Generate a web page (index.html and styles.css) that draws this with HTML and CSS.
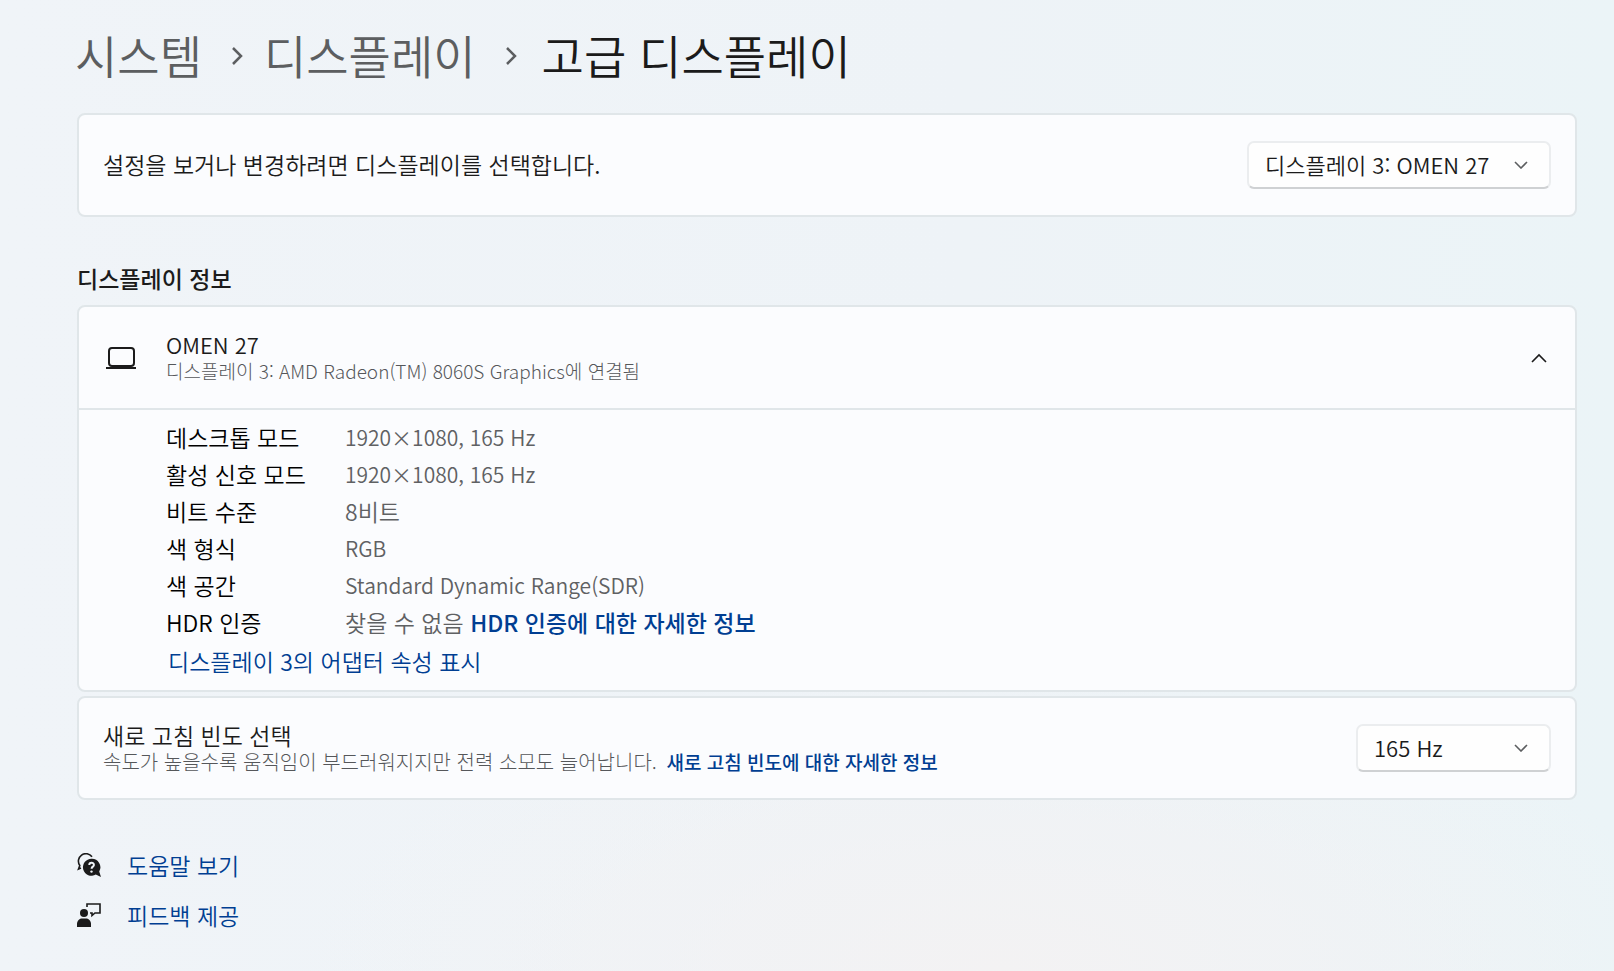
FILE: index.html
```html
<!DOCTYPE html>
<html lang="ko">
<head>
<meta charset="utf-8">
<meta name="viewport" content="width=device-width, initial-scale=1">
<title>고급 디스플레이</title>
<link rel="stylesheet" href="styles.css">
</head>
<body>
<main class="page">
  <nav class="crumbs" aria-label="탐색 경로">
    <a href="#system">시스템</a>
    <svg class="crumb-sep" viewBox="0 0 12 18" aria-hidden="true"><path d="M2 1l8 8-8 8"/></svg>
    <a href="#display">디스플레이</a>
    <svg class="crumb-sep" viewBox="0 0 12 18" aria-hidden="true"><path d="M2 1l8 8-8 8"/></svg>
    <h1>고급 디스플레이</h1>
  </nav>

  <section class="card row">
    <label class="title grow raised" for="display">설정을 보거나 변경하려면 디스플레이를 선택합니다.</label>
    <span class="picker picker-wide">
      <select id="display"><option>디스플레이 3: OMEN 27</option></select>
      <svg class="caret" viewBox="0 0 14 8" aria-hidden="true"><path d="M1 1l6 6 6-6"/></svg>
    </span>
  </section>

  <h2 class="section-title">디스플레이 정보</h2>

  <section class="card">
    <div class="row">
      <svg class="device" viewBox="0 0 30 22" aria-hidden="true"><rect x="3" y="1" width="25" height="18" rx="3"/><path d="M0 21h30"/></svg>
      <div class="grow raised">
        <div class="title device-name">OMEN 27</div>
        <div class="note">디스플레이 3: AMD Radeon(TM) 8060S Graphics에 연결됨</div>
      </div>
      <button class="collapse" type="button" aria-label="접기" aria-expanded="true">
        <svg viewBox="0 0 16 10" aria-hidden="true"><path d="M1 9l7-7 7 7"/></svg>
      </button>
    </div>
    <div class="details">
      <dl>
        <dt>데스크톱 모드</dt><dd class="latin">1920×1080, 165 Hz</dd>
        <dt>활성 신호 모드</dt><dd class="latin">1920×1080, 165 Hz</dd>
        <dt>비트 수준</dt><dd>8비트</dd>
        <dt>색 형식</dt><dd class="latin">RGB</dd>
        <dt>색 공간</dt><dd class="latin">Standard Dynamic Range(SDR)</dd>
        <dt>HDR 인증</dt><dd>찾을 수 없음 <a class="strong" href="#hdr">HDR 인증에 대한 자세한 정보</a></dd>
      </dl>
      <a class="adapter" href="#adapter">디스플레이 3의 어댑터 속성 표시</a>
    </div>
  </section>

  <section class="card row">
    <div class="grow">
      <label class="title" for="rate">새로 고침 빈도 선택</label>
      <div class="note note-large">속도가 높을수록 움직임이 부드러워지지만 전력 소모도 늘어납니다. <a class="strong more" href="#rate-info">새로 고침 빈도에 대한 자세한 정보</a></div>
    </div>
    <span class="picker">
      <select id="rate"><option>165 Hz</option></select>
      <svg class="caret" viewBox="0 0 14 8" aria-hidden="true"><path d="M1 1l6 6 6-6"/></svg>
    </span>
  </section>

  <footer class="links">
    <a href="#help">
      <svg viewBox="0 0 24 24" aria-hidden="true">
        <path class="line" d="M4 15l-2.500 1 1.300-3.500A7 7 0 1 1 15 3.800"/>
        <path d="M14.500 5.800a8.500 8.500 0 1 0 4.300 15.800L24 24l-1.800-5.400A8.500 8.500 0 0 0 14.500 5.800z"/>
        <path class="mark" d="M12.300 12.100c0-3 4.600-3 4.600-.2 0 1.800-2.300 1.700-2.300 3.800"/>
        <circle class="dot" cx="14.500" cy="18.600" r="1.200"/>
      </svg>
      <span>도움말 보기</span>
    </a>
    <a href="#feedback">
      <svg viewBox="0 0 24 24" aria-hidden="true">
        <circle cx="7" cy="10" r="4"/>
        <path d="M0 24v-3c0-3 2-5.500 5-5.500h4c3 0 5 2.500 5 5.500v3z"/>
        <path class="line" d="M10 4V1h13v9h-5l-3 2.500V10h-2"/>
      </svg>
      <span>피드백 제공</span>
    </a>
  </footer>
</main>
</body>
</html>
```
FILE: styles.css
```css
* { box-sizing: border-box; }

body {
  margin: 0;
  min-height: 100vh;
  background:
    radial-gradient(ellipse 700px 300px at 62% 100%, #f3f2f3, transparent),
    linear-gradient(90deg, #f0f4f8, #eef3f7 60%, #ebf4f7);
  color: #1b1b1b;
  font-family: "Noto Sans CJK KR", sans-serif;
  font-size: 23px;
  font-weight: 350;
  line-height: 28px;
}

a { color: #003e92; text-decoration: none; }
h1, h2, dl, dd { margin: 0; font-weight: inherit; }
svg { display: block; flex: none; fill: none; stroke: currentColor; }

.page { padding: 24px 37px 0 77px; }

.crumbs {
  display: flex;
  align-items: center;
  height: 64px;
  margin: 0 0 25px -2px;
  font-size: 46px;
  line-height: 60px;
}
.crumbs a, .crumbs h1 { padding-bottom: 4px; }
.crumbs a { color: #5c5e60; }
.crumbs h1 { margin-left: 4px; font-size: 46px; }
.crumb-sep { width: 12px; height: 18px; margin: 0 21px 0 29px; color: #5c5e60; stroke-width: 2.5; }

.card {
  border: 2px solid #e0e6e9;
  border-radius: 8px;
  background: #fbfcfe;
}
.card + .card { margin-top: 4px; }
.row { display: flex; align-items: center; min-height: 104px; padding: 0 24px; }
.card > .row { min-height: 101px; }
.grow { flex: 1; }
.raised { padding-bottom: 2px; }
.title { display: block; }
.device-name { font-size: 22px; }
.note { color: #55575a; font-size: 19px; font-weight: 300; line-height: 26px; }
.note-large { font-size: 20px; }
.latin { font-size: 21px; }
.strong { font-weight: 500; }
.more { margin-left: 4px; font-size: 19px; }

.section-title { margin: 47px 0 13px; font-size: 23px; font-weight: 500; }

.picker { display: grid; align-items: center; width: 195px; }
.picker-wide { width: 304px; }
.picker select {
  grid-area: 1 / 1;
  width: 100%;
  height: 48px;
  padding: 0 16px 2px;
  appearance: none;
  border: 2px solid #ebedef;
  border-bottom-color: #cfd1d3;
  border-radius: 7px;
  background: #fefefe;
  color: inherit;
  font-family: inherit;
  font-size: 22px;
  font-weight: inherit;
}
.caret {
  grid-area: 1 / 1;
  justify-self: end;
  width: 14px;
  height: 8px;
  margin-right: 23px;
  color: #5c5e60;
  stroke-width: 1.6;
  pointer-events: none;
}

.device { width: 30px; height: 22px; margin: 0 30px 0 3px; stroke-width: 2; }
.collapse { padding: 4px; border: 0; background: none; color: inherit; }
.collapse svg { width: 16px; height: 10px; stroke-width: 1.6; }

.details { padding: 9px 24px 8px 87px; border-top: 2px solid #e0e6e9; }
.details dl { display: grid; grid-template-columns: 179px 1fr; line-height: 37px; color: #000; }
.details dd { color: #5f6163; }
.adapter { display: block; margin-left: 2px; line-height: 41px; }

.links { display: grid; justify-items: start; gap: 22px; padding-top: 51px; }
.links a { display: flex; align-items: center; gap: 26px; }
.links svg { width: 24px; height: 24px; color: #1b1b1b; fill: currentColor; stroke: none; }
.links .line { fill: none; stroke: currentColor; stroke-width: 1.6; }
.links .mark { fill: none; stroke: #f0f4f8; stroke-width: 2; }
.links .dot { fill: #f0f4f8; }
```
